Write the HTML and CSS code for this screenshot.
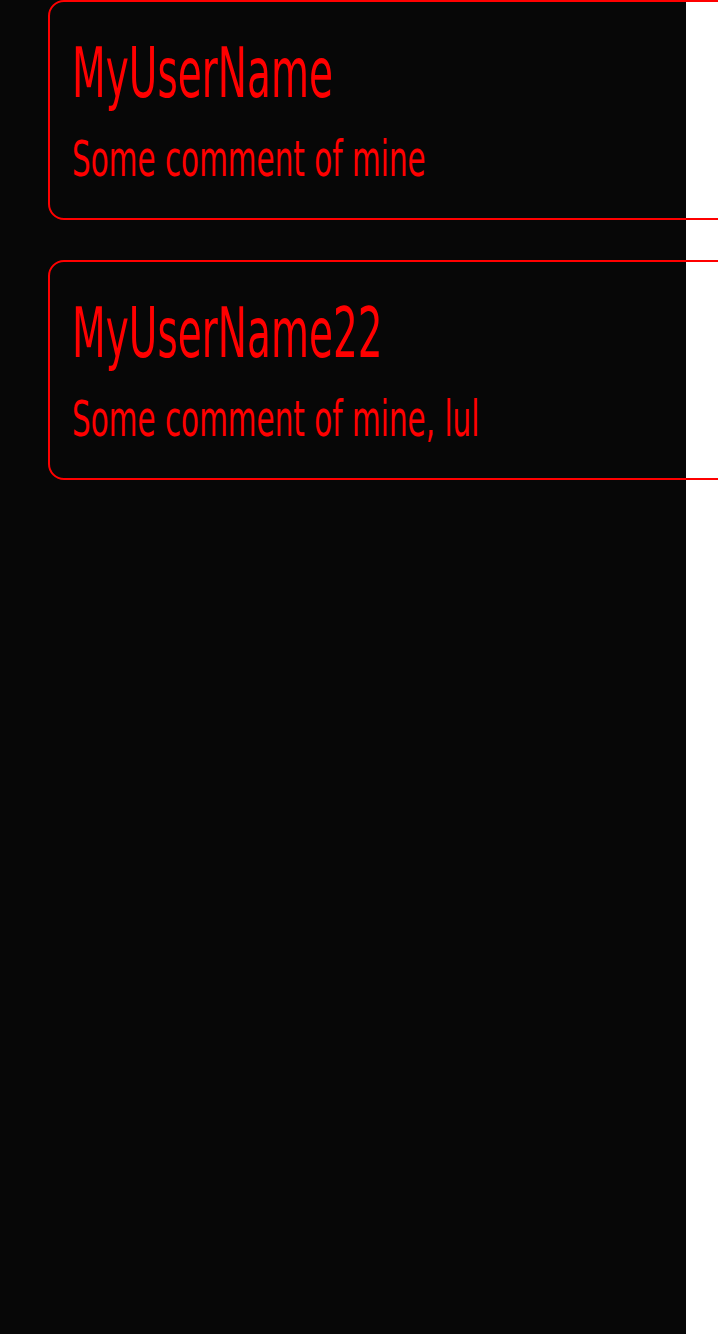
FILE: index.html
```html
<!DOCTYPE html>
<html>
<head>
<meta charset="utf-8">
<link rel="stylesheet" href="styles.css">
</head>
<body>
<main class="feed">
  <article class="card">
    <div class="user"><span>MyUserName</span></div>
    <div class="comment"><span>Some comment of mine</span></div>
  </article>
  <article class="card">
    <div class="user"><span>MyUserName22</span></div>
    <div class="comment"><span>Some comment of mine, lul</span></div>
  </article>
</main>
</body>
</html>
```
FILE: styles.css
```css
html {
  overflow: hidden;
  background: linear-gradient(to right, #070707 0, #070707 686px, #ffffff 686px);
}
body {
  margin: 0;
  min-height: 1334px;
  font-family: "DejaVu Sans Condensed", "DejaVu Sans", sans-serif;
  font-stretch: condensed;
  color: #ff0000;
}
.feed {
  padding-left: 48px;
}
.card {
  box-sizing: border-box;
  width: 700px;
  height: 220px;
  margin-bottom: 40px;
  border: 2px solid #ff0000;
  border-radius: 16px;
  padding: 36px 0 0 22px;
  white-space: nowrap;
}
.user {
  font-size: 70px;
  line-height: 70px;
}
.comment {
  margin-top: 26px;
  font-size: 50px;
  line-height: 50px;
}
.user span,
.comment span {
  display: inline-block;
  transform-origin: left center;
}
.user span {
  transform: scaleX(0.62);
}
.comment span {
  transform: scaleX(0.655);
}
```
